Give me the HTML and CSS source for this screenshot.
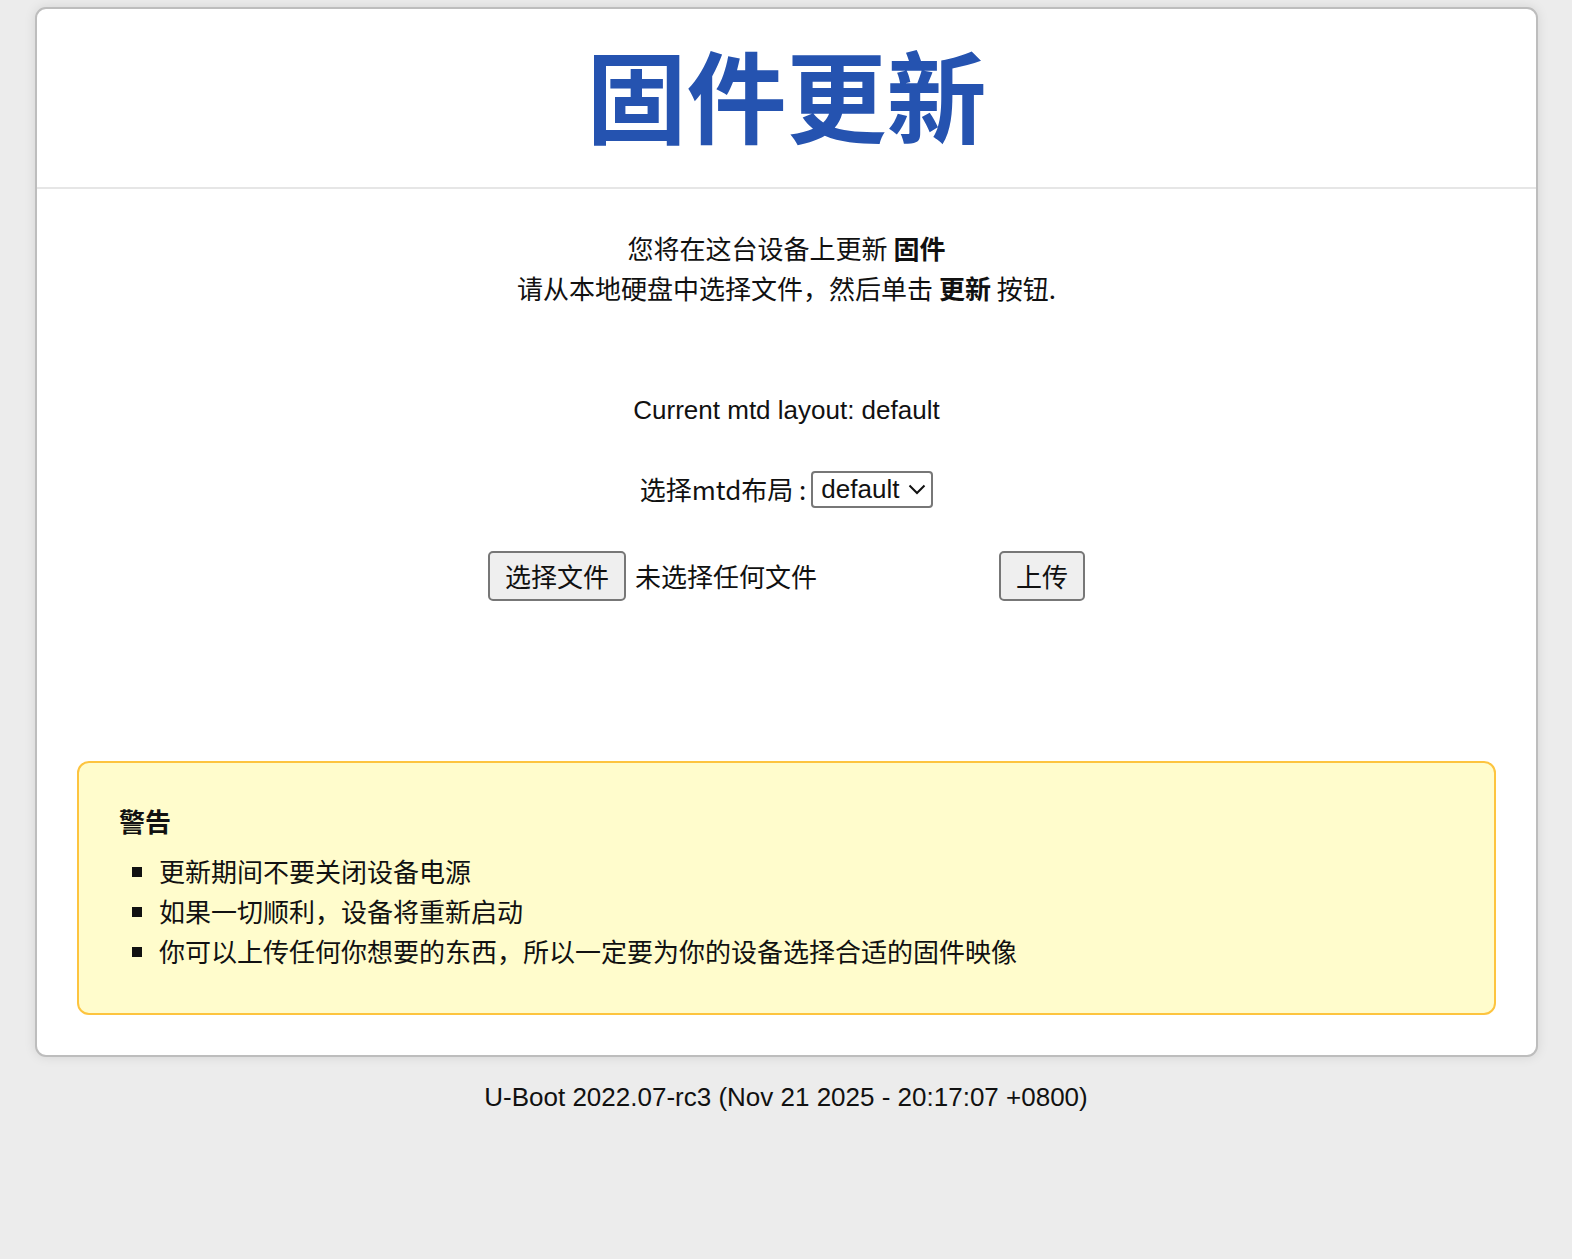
FILE: index.html
```html
<!DOCTYPE html>
<html lang="zh-CN">
<head>
<meta charset="utf-8">
<title>固件更新</title>
<link rel="stylesheet" href="styles.css">
</head>
<body>
<div class="card">
  <header class="head">
    <h1 class="title">固件更新</h1>
  </header>
  <main class="content">
    <p class="intro">您将在这台设备上更新 <strong>固件</strong><br>请从本地硬盘中选择文件，然后单击 <strong>更新</strong> 按钮.</p>
    <p class="layout">Current mtd layout: default</p>
    <div class="select-row">
      <span class="label">选择mtd布局 :</span>
      <span class="select">default<svg class="chev" width="18" height="11" viewBox="0 0 18 11"><path d="M1.5 1.5 L9 9 L16.5 1.5" fill="none" stroke="#111" stroke-width="2"/></svg></span>
    </div>
    <div class="file-row">
      <span class="file"><span class="btn">选择文件</span><span class="nofile">未选择任何文件</span></span>
      <span class="btn upload">上传</span>
    </div>
    <section class="warn">
      <h3 class="warn-title">警告</h3>
      <ul class="warn-list">
        <li>更新期间不要关闭设备电源</li>
        <li>如果一切顺利，设备将重新启动</li>
        <li>你可以上传任何你想要的东西，所以一定要为你的设备选择合适的固件映像</li>
      </ul>
    </section>
  </main>
</div>
<footer class="foot">U-Boot 2022.07-rc3 (Nov 21 2025 - 20:17:07 +0800)</footer>
</body>
</html>
```
FILE: styles.css
```css
html, body {
  margin: 0;
  padding: 0;
  background: #ececec;
}
body {
  font-family: "Liberation Sans", "Noto Sans CJK SC", sans-serif;
  font-size: 26px;
  line-height: 40px;
  color: #111;
  padding-top: 7px;
}
.card {
  margin-left: 35px;
  width: 1499px;
  background: #fff;
  border: 2px solid #bdbdbd;
  border-radius: 11px;
  box-shadow: 0 0 12px rgba(0,0,0,0.10);
}
.head {
  height: 178px;
  display: flex;
  align-items: center;
  justify-content: center;
  border-bottom: 2px solid #e6e6e6;
}
.title {
  margin: 0 0 10px;
  font-family: "Noto Sans CJK SC", sans-serif;
  font-size: 100px;
  line-height: 1;
  font-weight: 700;
  color: #2553b0;
}
.content {
  padding: 0 40px 40px;
  text-align: center;
}
.intro {
  margin: 39px 0 0;
  font-family: "Noto Sans CJK SC", sans-serif;
}
.intro strong { font-weight: 700; }
.layout {
  margin: 82px 0 0;
}
.select-row {
  margin-top: 39px;
  height: 40px;
  display: flex;
  align-items: center;
  justify-content: center;
  gap: 5px;
}
.label {
  font-family: "Noto Sans CJK SC", "Liberation Sans", sans-serif;
}
.select {
  box-sizing: border-box;
  height: 37px;
  width: 122px;
  border: 2px solid #777;
  border-radius: 4px;
  display: flex;
  align-items: center;
  justify-content: space-between;
  padding: 0 5px 0 8px;
  line-height: 1;
}
.chev { display: block; }
.file-row {
  margin-top: 42px;
  display: flex;
  align-items: center;
  justify-content: center;
}
.file {
  width: 504px;
  display: flex;
  align-items: center;
  gap: 9px;
  text-align: left;
}
.btn {
  box-sizing: border-box;
  height: 50px;
  display: inline-flex;
  align-items: center;
  justify-content: center;
  padding: 0;
  white-space: nowrap;
  background: #efefef;
  border: 2px solid #777;
  border-radius: 5px;
  font-family: "Noto Sans CJK SC", sans-serif;
  color: #111;
}
.file .btn { width: 138px; }
.nofile {
  font-family: "Noto Sans CJK SC", sans-serif;
}
.upload {
  margin-left: 7px;
  width: 86px;
}
.warn {
  margin-top: 160px;
  background: #fffccc;
  border: 2px solid #fdc43f;
  border-radius: 12px;
  padding: 38px 40px 42px;
  text-align: left;
  font-family: "Noto Sans CJK SC", sans-serif;
}
.warn-title {
  margin: 0;
  font-size: 26px;
  font-weight: 700;
  line-height: 40px;
}
.warn-list {
  margin: 10px 0 0;
  padding-left: 40px;
  list-style: square;
}
.foot {
  margin-top: 20px;
  text-align: center;
  padding-bottom: 140px;
}
```
